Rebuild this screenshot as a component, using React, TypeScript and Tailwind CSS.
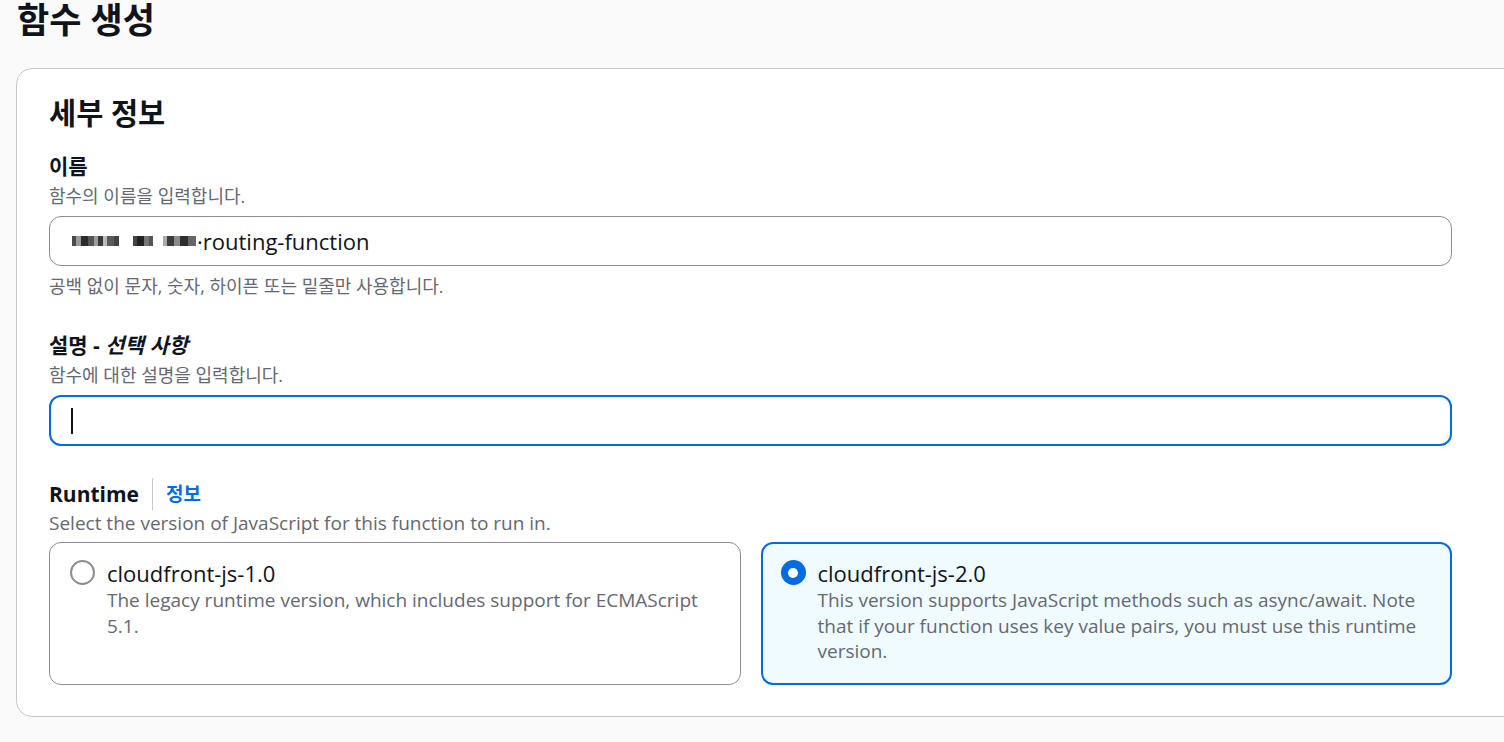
import React from "react";

const font = "font-['Open_Sans','Noto_Sans_CJK_KR',sans-serif]";

// mosaic blocks standing in for the redacted part of the name
const blurBlocks: [number, string][] = [
  [4, "#4b4b4b"], [5, "#9a9a9a"], [7, "#2b2b2b"], [6, "#555"], [4, "#9c9c9c"], [5, "#3a3a3a"], [4, "#bbb"], [7, "#5a5a5a"], [5, "#444"],
  [14, "transparent"], [4, "#444"], [7, "#222"], [5, "#777"], [4, "#555"],
  [10, "transparent"], [4, "#aaa"], [7, "#3c3c3c"], [6, "#8a8a8a"], [8, "#2e2e2e"], [8, "#666"],
];

function Radio({ checked }: { checked: boolean }) {
  return checked ? (
    <span className="mt-[2px] flex h-[25px] w-[25px] shrink-0 items-center justify-center rounded-full bg-[#006ce0]">
      <span className="h-[10px] w-[10px] rounded-full bg-white" />
    </span>
  ) : (
    <span className="mt-[2px] h-[25px] w-[25px] shrink-0 rounded-full border-2 border-[#8c8c94] bg-white" />
  );
}

function Tile({
  checked,
  title,
  lines,
}: {
  checked: boolean;
  title: string;
  lines: string[];
}) {
  return (
    <div
      className={
        checked
          ? "flex gap-[12px] rounded-[12px] border-2 border-[#006ce0] bg-[#f0fbff] px-[18px] pt-[14px] pb-[18px]"
          : "flex gap-[12px] rounded-[12px] border border-[#8c8c94] bg-white px-[20px] pt-[15px] pb-[19px]"
      }
    >
      <Radio checked={checked} />
      <div className="flex flex-col">
        <span className="text-[22px] leading-[30px] text-[#0f141a]">{title}</span>
        <span className="text-[19px] leading-[25.5px] text-[#656871]">
          {lines.map((l, i) => (
            <React.Fragment key={i}>
              {l}
              {i < lines.length - 1 && <br />}
            </React.Fragment>
          ))}
        </span>
      </div>
    </div>
  );
}

export default function App() {
  return (
    <div className={`min-h-screen overflow-hidden bg-[#fafafa] ${font}`}>
      <h1 className="pl-[17px] text-[35px] font-bold leading-[40px] text-[#0f141a]">함수 생성</h1>

      <div className="mt-[28px] ml-4 w-[1540px] rounded-2xl border border-[#c6c6cd] bg-white pl-[32px] pt-[25px] pb-[31px]">
        <div className="flex w-[1403px] flex-col">
          <h2 className="text-[29.5px] font-bold leading-[38px] text-[#0f141a]">세부 정보</h2>

          {/* 이름 */}
          <div className="mt-[19px] flex flex-col">
            <label className="text-[21px] font-bold leading-[30px] text-[#0f141a]">이름</label>
            <span className="text-[18px] leading-[30px] text-[#656871]">함수의 이름을 입력합니다.</span>
            <div className="mt-[5px] flex h-[50px] items-center rounded-[12px] border border-[#8c8c94] bg-white px-[22px]">
              <span className="mr-[1px] flex items-center">
                {blurBlocks.map(([w, c], i) => (
                  <span key={i} className="inline-block h-[10px]" style={{ width: w, background: c }} />
                ))}
              </span>
              <span className="text-[22px] text-[#0f141a]">·routing-function</span>
            </div>
            <span className="mt-[6px] text-[18px] leading-[28px] text-[#656871]">
              공백 없이 문자, 숫자, 하이픈 또는 밑줄만 사용합니다.
            </span>
          </div>

          {/* 설명 */}
          <div className="mt-[30px] flex flex-col">
            <label className="text-[21px] font-bold leading-[30px] text-[#0f141a]">
              설명 - <i>선택 사항</i>
            </label>
            <span className="text-[18px] leading-[30px] text-[#656871]">함수에 대한 설명을 입력합니다.</span>
            <div className="mt-[5px] flex h-[51px] items-center rounded-[12px] border-2 border-[#006ce0] bg-white px-[20px]">
              <span className="h-[26px] w-[2px] bg-[#0f141a]" />
            </div>
          </div>

          {/* Runtime */}
          <div className="mt-[32px] flex flex-col">
            <div className="flex h-[32px] items-center">
              <span className="text-[21px] font-bold leading-[30px] text-[#0f141a]">Runtime</span>
              <span className="mx-[13px] h-[32px] w-px bg-[#c6c6cd]" />
              <a className="text-[19px] font-bold leading-[30px] text-[#006ce0]">정보</a>
            </div>
            <span className="text-[19px] leading-[26px] text-[#656871]">
              Select the version of JavaScript for this function to run in.
            </span>
            <div className="mt-[6px] grid grid-cols-2 gap-[20px]">
              <Tile
                checked={false}
                title="cloudfront-js-1.0"
                lines={["The legacy runtime version, which includes support for ECMAScript", "5.1."]}
              />
              <Tile
                checked
                title="cloudfront-js-2.0"
                lines={[
                  "This version supports JavaScript methods such as async/await. Note",
                  "that if your function uses key value pairs, you must use this runtime",
                  "version.",
                ]}
              />
            </div>
          </div>
        </div>
      </div>
    </div>
  );
}
